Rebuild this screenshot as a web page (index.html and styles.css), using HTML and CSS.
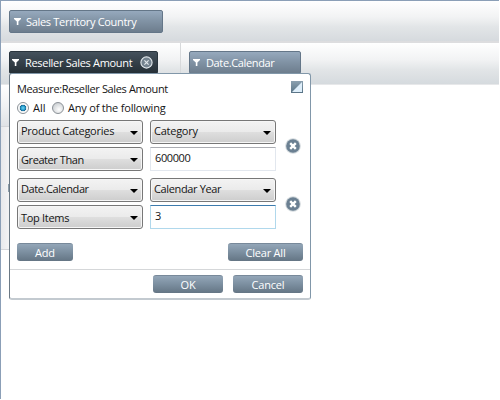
FILE: index.html
```html
<!DOCTYPE html>
<html lang="en">
<head>
<meta charset="utf-8">
<title>Pivot filter</title>
<link rel="stylesheet" href="styles.css">
</head>
<body>
<main class="pivot">
  <header class="filter-bar">
    <div class="field field-country"><svg class="funnel" viewBox="0 0 7 7"><path d="M0 0H7V1L4.4 3.6V7H2.8V3.6L0 1Z"/></svg><span class="t-country">Sales Territory Country</span></div>
  </header>
  <section class="axis-row">
    <div class="measure-area">
      <div class="field field-measure"><svg class="funnel" viewBox="0 0 7 7"><path d="M0 0H7V1L4.4 3.6V7H2.8V3.6L0 1Z"/></svg><span class="t-reseller">Reseller Sales Amount</span>
        <svg class="remove" viewBox="0 0 13 13"><circle cx="6.5" cy="6.5" r="5.6"/><path d="M4.4 4.4l4.2 4.2M8.6 4.4L4.4 8.6"/></svg>
      </div>
    </div>
    <div class="column-area">
      <div class="field field-date"><svg class="funnel" viewBox="0 0 7 7"><path d="M0 0H7V1L4.4 3.6V7H2.8V3.6L0 1Z"/></svg><span class="t-date">Date.Calendar</span></div>
    </div>
  </section>
  <aside class="row-head"></aside>
  <aside class="row-body"><i class="grip"></i></aside>

  <form class="popup">
    <div class="heading"><span class="t-heading">Measure:Reseller Sales Amount</span>
      <svg class="corner" viewBox="0 0 12 12"><defs><linearGradient id="cg" x2="0" y2="1"><stop stop-color="#8ba0b0"/><stop offset="1" stop-color="#587386"/></linearGradient></defs><path fill="url(#cg)" d="M0 0H12V12H0Z"/><path fill="#deeefa" d="M11 1V11H1Z"/></svg>
    </div>
    <div class="modes">
      <i class="radio on"></i><span class="t-all">All</span>
      <i class="radio"></i><span class="t-any">Any of the following</span>
    </div>
    <div class="condition">
      <div class="combo"><span class="t-product">Product Categories</span><i class="arrow"></i></div>
      <div class="combo"><span class="t-category">Category</span><i class="arrow"></i></div>
      <div class="combo low"><span class="t-greater">Greater Than</span><i class="arrow"></i></div>
      <div class="input"><span class="t-600">600000</span></div>
      <svg class="delete" viewBox="0 0 16 16"><circle class="halo" cx="8" cy="8" r="7.8"/><circle class="disc" cx="8" cy="8" r="6.8"/><path d="M5.2 5.2l5.6 5.6M10.8 5.2l-5.6 5.6"/></svg>
    </div>
    <div class="condition second">
      <div class="combo"><span class="t-date2">Date.Calendar</span><i class="arrow"></i></div>
      <div class="combo"><span class="t-year">Calendar Year</span><i class="arrow"></i></div>
      <div class="combo low"><span class="t-top">Top Items</span><i class="arrow"></i></div>
      <div class="input focus"><span>3</span></div>
      <svg class="delete" viewBox="0 0 16 16"><circle class="halo" cx="8" cy="8" r="7.8"/><circle class="disc" cx="8" cy="8" r="6.8"/><path d="M5.2 5.2l5.6 5.6M10.8 5.2l-5.6 5.6"/></svg>
    </div>
    <div class="edit-actions"><div class="button add">Add</div><div class="button clear">Clear All</div></div>
    <footer class="actions"><div class="button">OK</div><div class="button">Cancel</div></footer>
  </form>
</main>
</body>
</html>
```
FILE: styles.css
```css
* { box-sizing: border-box; }
body { margin: 0; background: #fff; font: 11px/14px "Open Sans", "Noto Sans", sans-serif; color: #151515; overflow: hidden; }
svg { display: block; flex: none; }
span { white-space: nowrap; }
.pivot { position: relative; width: 499px; height: 399px; border: solid #8b9fb7; border-width: 1px 0 0 1px; }
.filter-bar { height: 42px; padding: 9px 0 0 8px; background: linear-gradient(#fff, #f2f3f4 40%, #e2e5e7 65%, #d6dade); border-bottom: 2px solid #dddddf; }
.axis-row { display: flex; height: 42px; background: linear-gradient(#fff, #f2f3f4 40%, #e2e5e7 65%, #d5dade); border-bottom: 1px solid #e7e8ea; }
.measure-area { width: 180px; padding: 8px 0 0 8px; border-right: 1px solid #d7d9db; }
.column-area { padding: 8px 0 0 8px; }
.field { display: flex; align-items: center; height: 23px; padding-left: 4px; border: 1px solid #647688; border-radius: 2px; background: linear-gradient(#96a9bd, #8294a6 45%, #6d7d8d); color: #fff; }
.field span { margin-left: 5px; }
.field-country { width: 154px; }
.field-measure { width: 149px; padding-left: 2px; border-color: #29343d; background: linear-gradient(#44515c, #252f36); }
.field-measure span { margin-left: 6px; }
.field-date { width: 112px; padding-left: 3px; }
.field-date span { margin-left: 6px; }
.funnel { width: 7px; height: 7px; fill: #fff; }
.remove { width: 13px; height: 13px; margin: -1px 4px 0 auto; fill: #74838f; stroke: #e3e9ed; stroke-width: 1.1; }
.row-head { width: 9px; height: 41px; background: linear-gradient(#fff, #f1f2f4 50%, #dfe2e6); }
.row-body { width: 9px; height: 124px; padding: 57px 0 0 7px; background: linear-gradient(90deg, #e8e9ec, #f5f5f6); border: solid #d4d6da; border-width: 1px 0; }
.grip { display: block; width: 2px; height: 8px; background: #8d9eab; }

.t-country { letter-spacing: -0.31px; }
.t-reseller { letter-spacing: -0.31px; }
.t-date { letter-spacing: -0.36px; }
.t-heading { letter-spacing: -0.37px; }
.t-any { letter-spacing: -0.2px; }
.t-product { letter-spacing: -0.25px; }
.t-category { letter-spacing: -0.25px; }
.t-greater { letter-spacing: -0.42px; }
.t-date2 { letter-spacing: -0.42px; }
.t-year { letter-spacing: -0.36px; }
.t-top { letter-spacing: -0.3px; }
.t-600 { letter-spacing: -0.4px; }

.popup { position: absolute; left: 8px; top: 72px; width: 302px; height: 227px; background: #fff; border: 1px solid #8197a9; border-left-color: #6b7985; border-bottom: 2px solid #c3cad0; border-radius: 3px; }
.heading { display: flex; justify-content: space-between; height: 26px; padding: 7px 7px 0; }
.heading span { margin-top: 1px; }
.corner { width: 12px; height: 12px; }
.modes { display: flex; align-items: center; height: 16px; padding-left: 7px; }
.radio { width: 12px; height: 12px; border: 1px solid #8b9197; border-radius: 50%; background: radial-gradient(circle at 60% 65%, #fff, #cbcfd2 80%); }
.radio.on { background: radial-gradient(circle, #73d5f0 0, #249acb 30%, #17618c 43%, #e6eaec 50%, #fff 65%); }
.modes span { margin-left: 4px; }
.modes .t-all { width: 14px; margin-right: 5px; }
.condition { position: relative; display: grid; grid-template: 24px 24px / 126px 126px; gap: 3px 7px; margin: 4px 0 0 7px; }
.condition.second { margin-top: 7px; }
.combo { display: flex; align-items: center; justify-content: space-between; padding: 0 4px 2px 3px; border: 1px solid #777; border-radius: 3px; background: linear-gradient(#f3f3f3, #ebebeb 48%, #dedede 52%, #cdcdcd); box-shadow: inset 0 0 0 1px #f6f6f6; }
.combo.low { padding: 2px 4px 0 3px; }
.low .arrow { margin-top: 0; }
.arrow { width: 0; height: 0; margin-top: 4px; border: solid transparent; border-width: 4px 4px 0; border-top-color: #000; }
.input { padding: 3px 4px; border: 1px solid #e2e7ee; border-top-color: #abadb3; }
.input.focus { border-color: #b0d8ec; border-top-color: #3d7bad; }
.delete { position: absolute; left: 268px; top: 17.5px; width: 16px; height: 16px; }
.halo { fill: #d3d9dd; }
.disc { fill: #6b8092; }
.delete path { fill: none; stroke: #fff; stroke-width: 2.4; }
.edit-actions { display: flex; justify-content: space-between; margin-top: 14px; padding: 0 7px; border-bottom: 1px solid #d5d7d9; height: 27px; }
.button { width: 70px; height: 18px; line-height: 17px; letter-spacing: -0.2px; text-align: center; color: #fff; border: solid #78899a; border-width: 1px 0 0; border-radius: 3px; background: linear-gradient(#93a6b8, #7b8e9f 50%, #647584); }
.add { width: 56px; }
.clear { width: 75px; }
.actions { display: flex; justify-content: flex-end; gap: 10px; padding: 5px 7px 0; }
```
